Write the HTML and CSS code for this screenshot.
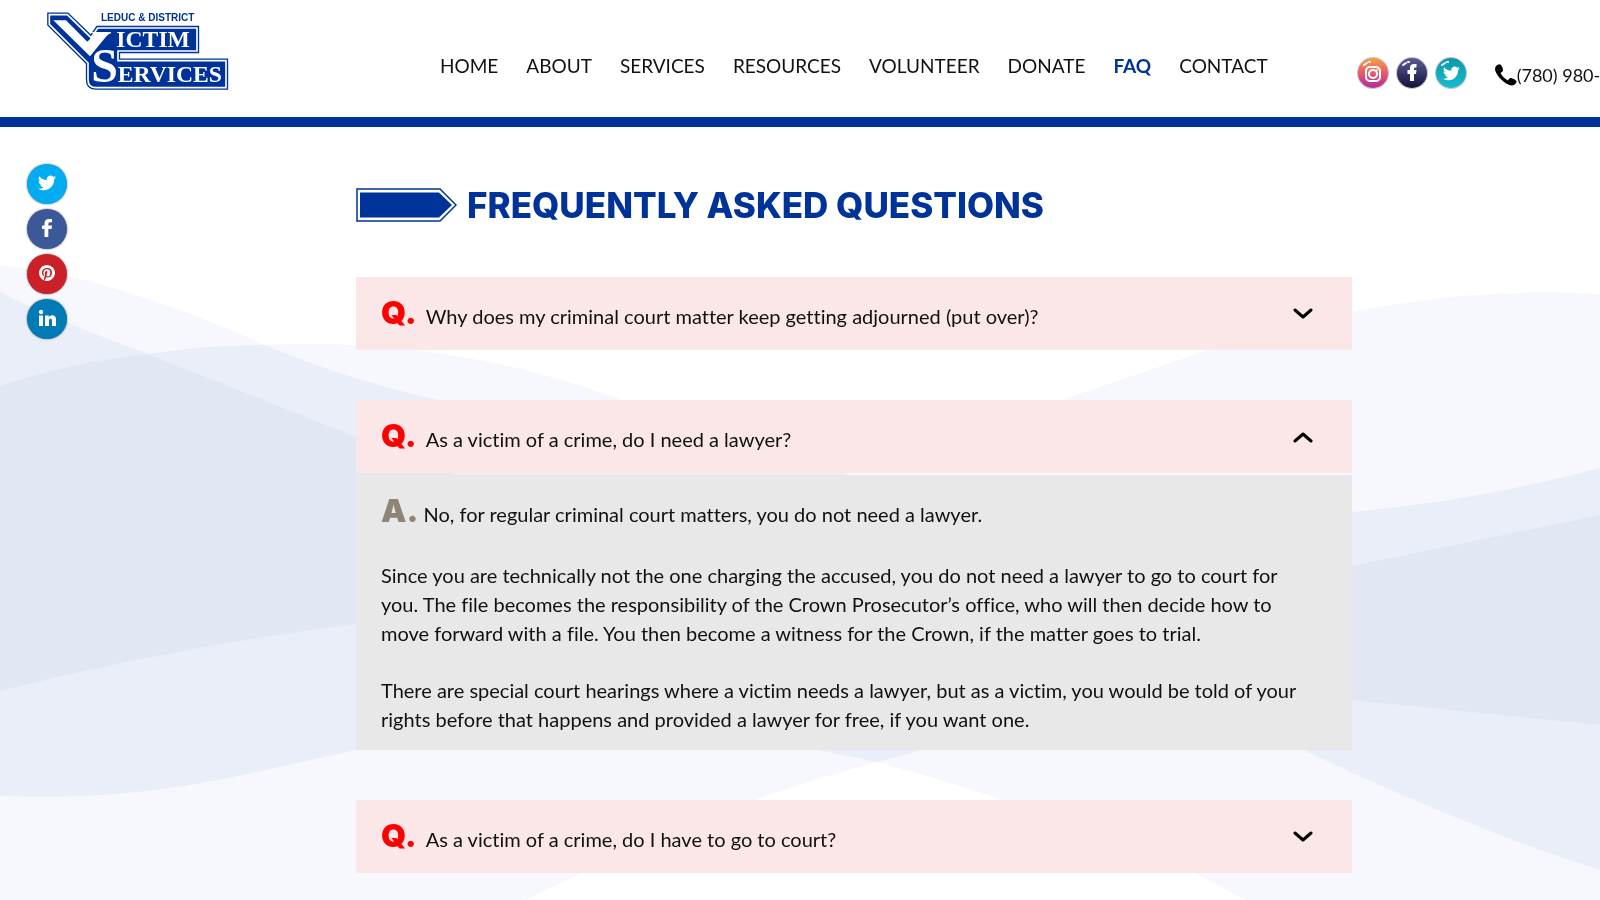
FILE: index.html
```
<!DOCTYPE html>
<html lang="en">

<head>
    <title>FAQ | Leduc &amp; District Victim Services</title>
    <meta charset="utf-8">
    <meta name="viewport" content="width=device-width, initial-scale=1.0">
    <link rel="stylesheet" href="styles.css">
</head>

<body>
    <!-- background waves -->
    <svg class="waves" viewBox="0 0 1600 900" preserveAspectRatio="none" aria-hidden="true">
        <path fill="#f6f8fd" d="M0 265Q110 276 265 345Q450 336 622 400L850 470L1061 400L1200 353Q1410 282 1600 294V900H1245L1203 877Q1060 812 877 762Q730 801 582 873L525 900H0Z"/>
        <path fill="#eaeef8" d="M0 292Q60 322 148 354Q206 345 265 345Q350 381 439 400L853 475L1352 512Q1480 500 1600 468V870Q1480 833 1303 750L1200 700H1000L922 750L877 762L818 750L700 700H500L356 750C250 772 160 802 0 796Z"/>
        <path fill="#e1e7f3" d="M0 386Q70 362 148 354L356 437L455 475L650 580L356 624Q180 646 0 691ZM1100 600L1352 566L1600 515V725L1352 700L1100 690Z"/>
    </svg>

    <header class="header">
        <a class="logo" href="#" aria-label="Leduc &amp; District Victim Services">
            <svg width="184" height="80" viewBox="48 32 552 240">
                <path fill="none" stroke="#003399" stroke-width="13" d="M58 43H112L183 112L203 83H501V152H264V181H588V262H198Q174 262 174 238V188L58 72Z"/>
                <path fill="#003399" stroke="#fff" stroke-width="5" d="M58 43H112L183 112L203 83H501V152H264V181H588V262H198Q174 262 174 238V188L58 72Z"/>
                <path fill="#fff" d="M70 60H108L172 124L192 104Q194 98 186 98V95H243V99Q234 101 228 109L180 168Z"/>
                <g class="logo-serif">
                    <text x="184" y="245" font-size="144">S</text>
                    <text x="259" y="139" font-size="71">ICTIM</text>
                    <text x="263" y="244" font-size="71">ERVICES</text>
                </g>
                <text class="logo-top" x="213" y="62" font-size="30">LEDUC &amp; DISTRICT</text>
            </svg>
        </a>
        <nav class="nav">
            <a href="#">HOME</a>
            <a href="#">ABOUT</a>
            <a href="#">SERVICES</a>
            <a href="#">RESOURCES</a>
            <a href="#">VOLUNTEER</a>
            <a href="#">DONATE</a>
            <a href="#" class="active">FAQ</a>
            <a href="#">CONTACT</a>
        </nav>
        <div class="social">
            <a href="#" aria-label="Instagram">
                <svg width="34" height="34" viewBox="0 0 34 34">
                    <defs>
                        <linearGradient id="insta" x2="0" y2="1"><stop offset="0" stop-color="#f9a03c"/><stop offset=".5" stop-color="#e65a6c"/><stop offset="1" stop-color="#b32a9b"/></linearGradient>
                        <linearGradient id="face" x2="0" y2="1"><stop offset="0" stop-color="#5c5a96"/><stop offset="1" stop-color="#14123c"/></linearGradient>
                        <linearGradient id="tweet" x2="0" y2="1"><stop offset="0" stop-color="#0b98ac"/><stop offset="1" stop-color="#17bcd0"/></linearGradient>
                    </defs>
                    <circle cx="17" cy="17" r="16" fill="#c5c5cb"/>
                    <circle cx="17" cy="17" r="15" fill="url(#insta)"/>
                    <path class="shine" d="M8 9l3-2M13 6h1"/>
                    <g fill="none" stroke="#fff" stroke-width="2"><rect x="10" y="11" width="14" height="14" rx="4"/><circle cx="17" cy="18" r="4"/></g>
                    <circle cx="21" cy="14" r="1" fill="#fff"/>
                </svg>
            </a>
            <a href="#" aria-label="Facebook">
                <svg width="34" height="34" viewBox="0 0 34 34">
                    <circle cx="17" cy="17" r="16" fill="#c5c5cb"/>
                    <circle cx="17" cy="17" r="15" fill="url(#face)"/>
                    <path class="shine" d="M8 9l3-2M13 6h1"/>
                    <path fill="#fff" d="M15 25V18H12.500V14H15V12Q15 8 19 8H21.500V11.500H20Q19 11.500 19 13V14H21.500L21 18H19V25Z"/>
                </svg>
            </a>
            <a href="#" aria-label="Twitter">
                <svg width="34" height="34" viewBox="0 0 34 34">
                    <circle cx="17" cy="17" r="16" fill="#c5c5cb"/>
                    <circle cx="17" cy="17" r="15" fill="url(#tweet)"/>
                    <path class="shine" d="M8 9l3-2M13 6h1"/>
                    <path fill="#fff" transform="translate(9 9) scale(.7)" d="M23.950 4.570a10 10 0 0 1-2.820.770 4.960 4.960 0 0 0 2.160-2.720c-.950.550-2 .950-3.130 1.180a4.920 4.920 0 0 0-8.380 4.480C7.690 8.090 4.070 6.130 1.640 3.160a4.930 4.930 0 0 0 1.520 6.570 4.900 4.900 0 0 1-2.230-.610v.060a4.920 4.920 0 0 0 3.950 4.830 5 5 0 0 1-2.210.080 4.940 4.940 0 0 0 4.600 3.420A9.870 9.870 0 0 1 0 19.540a14 14 0 0 0 7.550 2.210c9.050 0 14-7.500 14-13.980v-.640a9.940 9.940 0 0 0 2.400-2.560z"/>
                </svg>
            </a>
        </div>
        <a class="phone" href="tel:780980">
            <svg width="22" height="22" viewBox="0 0 22 22" aria-hidden="true"><path d="M1 2Q4 -1 6 1Q8 4 8 6Q8 8 5.500 9Q8 14 13 16.500Q14 13.500 16 14Q20 15 21.500 17Q22 19 19 21Q15 22.500 9 18Q2 12.500 0 6Q0 3 1 2Z"/></svg>
            <span>(780) 980-</span>
        </a>
    </header>

    <aside class="share">
        <a href="#" class="twitter" aria-label="Share on Twitter">
            <svg width="18" height="18" viewBox="0 0 24 24"><path d="M23.950 4.570a10 10 0 0 1-2.820.770 4.960 4.960 0 0 0 2.160-2.720c-.950.550-2 .950-3.130 1.180a4.920 4.920 0 0 0-8.380 4.480C7.690 8.090 4.070 6.130 1.640 3.160a4.930 4.930 0 0 0 1.520 6.570 4.900 4.900 0 0 1-2.230-.610v.060a4.920 4.920 0 0 0 3.950 4.830 5 5 0 0 1-2.210.080 4.940 4.940 0 0 0 4.600 3.420A9.870 9.870 0 0 1 0 19.540a14 14 0 0 0 7.550 2.210c9.050 0 14-7.500 14-13.980v-.640a9.940 9.940 0 0 0 2.400-2.560z"/></svg>
        </a>
        <a href="#" class="facebook" aria-label="Share on Facebook">
            <svg width="18" height="18" viewBox="0 0 18 18"><path d="M6.500 18V10H4V6.500H6.500V4.500Q6.500 0 11 0H14V3.200H12Q10.300 3.200 10.300 5V6.500H14L13.500 10H10.300V18Z"/></svg>
        </a>
        <a href="#" class="pinterest" aria-label="Share on Pinterest">
            <svg width="16" height="16" viewBox="0 0 24 24"><path d="M12 0C5.370 0 0 5.370 0 12c0 5.080 3.160 9.420 7.620 11.160-.1-.95-.2-2.400.04-3.440.22-.94 1.400-5.960 1.400-5.960s-.36-.72-.36-1.780c0-1.660.97-2.910 2.170-2.910 1.020 0 1.520.77 1.520 1.690 0 1.030-.66 2.570-1 4-.28 1.190.6 2.170 1.780 2.170 2.130 0 3.770-2.250 3.770-5.490 0-2.870-2.060-4.880-5.010-4.880-3.410 0-5.410 2.560-5.410 5.200 0 1.030.4 2.140.89 2.740.1.120.11.220.08.340l-.33 1.360c-.05.220-.17.270-.4.160-1.500-.7-2.430-2.890-2.430-4.650 0-3.780 2.750-7.260 7.930-7.260 4.160 0 7.400 2.970 7.400 6.930 0 4.140-2.610 7.460-6.230 7.460-1.220 0-2.360-.63-2.750-1.380l-.75 2.850c-.27 1.040-1 2.350-1.490 3.150A12 12 0 1 0 12 0z"/></svg>
        </a>
        <a href="#" class="linkedin" aria-label="Share on LinkedIn">
            <svg width="18" height="18" viewBox="0 0 18 18"><circle cx="3" cy="3" r="2.200"/><path d="M1 6.500H5V17H1ZM7 6.500H10.700V8Q12 6.200 14 6.200Q18 6.200 18 10.500V17H14V11.500Q14 9.400 12.500 9.400Q11 9.400 11 11.500V17H7Z"/></svg>
        </a>
    </aside>

    <main class="content">
        <h1 class="title">
            <svg width="101" height="34" viewBox="0 0 101 34" aria-hidden="true">
                <path fill="#fff" stroke="#003399" stroke-width="1.500" d="M1 1H84L100 17L84 33H1Z"/>
                <path fill="#003399" d="M4 4.500H83L96 17L83 29.500H4Z"/>
            </svg>
            FREQUENTLY ASKED QUESTIONS
        </h1>

        <section class="faq">
            <button class="question" aria-expanded="false">
                <span class="mark">Q.</span>
                <span class="label">Why does my criminal court matter keep getting adjourned (put over)?</span>
                <svg class="arrow" width="20" height="12" viewBox="0 0 20 12"><path d="M2 2L10 9L18 2"/></svg>
            </button>
        </section>

        <section class="faq">
            <button class="question" aria-expanded="true">
                <span class="mark">Q.</span>
                <span class="label">As a victim of a crime, do I need a lawyer?</span>
                <svg class="arrow" width="20" height="12" viewBox="0 0 20 12"><path d="M2 10L10 3L18 10"/></svg>
            </button>
            <div class="answer">
                <p class="first"><span class="mark">A.</span> No, for regular criminal court matters, you do not need a lawyer.</p>
                <p>Since you are technically not the one charging the accused, you do not need a lawyer to go to court for<br>
                you. The file becomes the responsibility of the Crown Prosecutor’s office, who will then decide how to<br>
                move forward with a file. You then become a witness for the Crown, if the matter goes to trial.</p>
                <p>There are special court hearings where a victim needs a lawyer, but as a victim, you would be told of your<br>
                rights before that happens and provided a lawyer for free, if you want one.</p>
            </div>
        </section>

        <section class="faq">
            <button class="question" aria-expanded="false">
                <span class="mark">Q.</span>
                <span class="label">As a victim of a crime, do I have to go to court?</span>
                <svg class="arrow" width="20" height="12" viewBox="0 0 20 12"><path d="M2 2L10 9L18 2"/></svg>
            </button>
        </section>
    </main>
</body>

</html>
```
FILE: styles.css
```
* {
    box-sizing: border-box;
}

body {
    margin: 0;
    min-height: 100vh;
    overflow: hidden;
    font-family: Lato, "Open Sans", sans-serif;
    font-size: 20px;
    font-variant-ligatures: none;
    color: #111;
}

a {
    color: inherit;
    text-decoration: none;
}

svg {
    display: block;
    flex-shrink: 0;
}

.waves {
    position: fixed;
    z-index: -1;
    left: 0;
    top: 0;
    width: 100%;
    height: 100%;
}

.header {
    display: flex;
    align-items: flex-start;
    height: 127px;
    padding-left: 46px;
    background-color: white;
    border-bottom: 10px solid #003399;
    white-space: nowrap;
    overflow: hidden;
}

.logo {
    margin-top: 11px;
}

.logo-serif {
    font-family: "Liberation Serif", serif;
    font-weight: bold;
    fill: white;
}

.logo-top {
    font-family: "Liberation Sans", sans-serif;
    font-weight: bold;
    fill: #003399;
}

.nav {
    display: flex;
    gap: 28px;
    margin: 54px 0 0 210px;
    font-size: 19px;
    line-height: 24px;
}

.active {
    font-weight: bold;
    color: #003399;
}

.social {
    display: flex;
    gap: 5px;
    margin: 56px 0 0 88px;
}

.shine {
    fill: none;
    stroke: white;
    stroke-width: 2;
    stroke-linecap: round;
}

.phone {
    display: flex;
    align-items: center;
    margin: 63px 0 0 27px;
    font-size: 18px;
    line-height: 24px;
}

.share {
    position: fixed;
    left: 27px;
    top: 164px;
    display: flex;
    flex-direction: column;
    gap: 5px;
}

.share a {
    display: flex;
    align-items: center;
    justify-content: center;
    width: 40px;
    height: 40px;
    padding-bottom: 2px;
    border-radius: 50%;
    box-shadow: 0 0 2px rgba(0, 0, 0, 0.6);
    fill: white;
}

.twitter {
    background-color: #03abf0;
}

.facebook {
    background-color: #3b5998;
}

.pinterest {
    background-color: #cb2027;
}

.linkedin {
    background-color: #007bb6;
}

.content {
    padding: 57px 248px 0 356px;
}

.title {
    display: flex;
    align-items: center;
    gap: 10px;
    height: 41px;
    margin: 0 0 52px;
    font-family: Inter, sans-serif;
    font-size: 35px;
    font-weight: 800;
    color: #003399;
    white-space: nowrap;
}

.faq {
    margin-bottom: 50px;
}

.question {
    display: flex;
    align-items: baseline;
    width: 100%;
    height: 73px;
    padding: 16px 39px 0 25px;
    border: 0;
    background-color: #fbe7e7;
    font: inherit;
    color: inherit;
    text-align: left;
}

.mark {
    display: inline-block;
    font-family: Inter, sans-serif;
    font-size: 32px;
    font-weight: 900;
    line-height: 40px;
    color: red;
}

.label {
    flex: 1;
    padding-left: 9px;
}

.arrow {
    align-self: flex-start;
    margin-top: 15px;
    fill: none;
    stroke: black;
    stroke-width: 3;
    stroke-linecap: round;
    stroke-linejoin: round;
}

.answer {
    margin-top: 2px;
    padding: 16px 25px;
    background-color: #e9e8e8;
    line-height: 29px;
}

.answer p {
    margin: 0 0 28px;
}

.answer .first {
    margin-bottom: 30px;
}

.answer p:last-child {
    margin: 0;
}

.answer .mark {
    color: #8f8574;
}
```
